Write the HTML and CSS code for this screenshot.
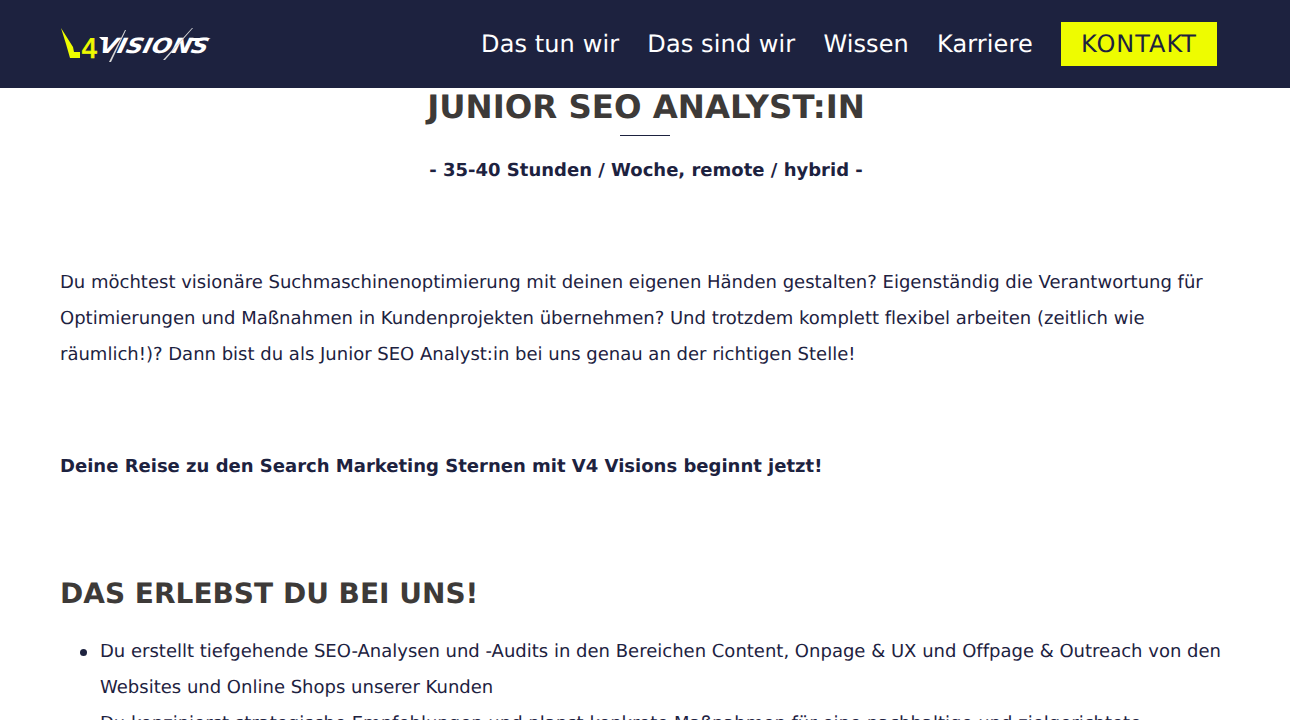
FILE: index.html
```html
<!DOCTYPE html>
<html lang="de">
<head>
    <meta charset="UTF-8">
    <title>Junior SEO Analyst:in</title>
    <link rel="stylesheet" href="styles.css">
</head>
<body>
<header class="site-header">
    <a href="#" class="logo" aria-label="V4 Visions">
        <svg width="152" height="40" viewBox="0 0 152 40">
            <polygon class="logo-v" points="1,4 13,23 14,28 20,28 20,34 10,34 6,20"/>
            <text x="21" y="34" class="logo-four">4</text>
            <text x="0" y="0" transform="translate(38 29) skewX(-14)" class="logo-word" textLength="109" lengthAdjust="spacingAndGlyphs">VISIONS</text>
            <polygon class="logo-word-tail" points="39,13 48,13 47,16 42,16"/>
            <polygon class="logo-word-tail" points="130,14 151,14 141,17 130,17"/>
            <polygon class="logo-cut" points="49,38 65,6 66,6 51,38"/>
            <polygon class="logo-cut" points="103,36 132,4 133,4 105,36"/>
        </svg>
    </a>
    <nav class="main-nav">
        <a href="#">Das tun wir</a>
        <a href="#">Das sind wir</a>
        <a href="#">Wissen</a>
        <a href="#">Karriere</a>
        <a href="#" class="btn-contact">KONTAKT</a>
    </nav>
</header>

<main class="content">
    <h1>JUNIOR SEO ANALYST:IN</h1>
    <div class="title-line"></div>
    <p class="subtitle">- 35-40 Stunden / Woche, remote / hybrid -</p>

    <p class="intro">Du möchtest visionäre Suchmaschinenoptimierung mit deinen eigenen Händen gestalten? Eigenständig die Verantwortung für Optimierungen und Maßnahmen in Kundenprojekten übernehmen? Und trotzdem komplett flexibel arbeiten (zeitlich wie räumlich!)? Dann bist du als Junior SEO Analyst:in bei uns genau an der richtigen Stelle!</p>

    <p class="claim">Deine Reise zu den Search Marketing Sternen mit V4 Visions beginnt jetzt!</p>

    <h2>DAS ERLEBST DU BEI UNS!</h2>
    <ul>
        <li>Du erstellt tiefgehende SEO-Analysen und -Audits in den Bereichen Content, Onpage &amp; UX und Offpage &amp; Outreach von den Websites und Online Shops unserer Kunden</li>
        <li>Du konzipierst strategische Empfehlungen und planst konkrete Maßnahmen für eine nachhaltige und zielgerichtete Suchmaschinenoptimierung</li>
    </ul>
</main>
</body>
</html>
```

FILE: styles.css
```css
html, body {
    margin: 0;
    padding: 0;
}

body {
    font-family: "DejaVu Sans", sans-serif;
    font-size: 18px;
    line-height: 36px;
    letter-spacing: 0.004px;
    color: #1d223f;
    background-color: #fff;
    padding-top: 88px;
    text-rendering: geometricPrecision;
    font-variant-ligatures: none;
}

.site-header {
    position: fixed;
    top: 0;
    left: 0;
    right: 0;
    height: 88px;
    box-sizing: border-box;
    padding: 0 73px 0 60px;
    background-color: #1d223f;
    display: flex;
    align-items: center;
    justify-content: space-between;
}

.logo {
    display: block;
    height: 40px;
}

.logo svg {
    display: block;
    overflow: visible;
}

.logo-word {
    font-family: "DejaVu Sans", sans-serif;
    font-size: 21px;
    font-weight: bold;
    font-style: italic;
    fill: #fff;
}

.logo-word-tail {
    fill: #fff;
}

.logo-four {
    font-family: "DejaVu Sans", sans-serif;
    font-size: 27px;
    fill: #eefc00;
    stroke: #eefc00;
    stroke-width: 0.7;
}

.logo-v {
    fill: #eefc00;
}

.logo-cut {
    fill: #d8d8d8;
}

.main-nav {
    display: flex;
    align-items: center;
    gap: 28.2px;
}

.main-nav a {
    font-size: 24px;
    line-height: 44px;
    letter-spacing: 0.1px;
    color: #fff;
    text-decoration: none;
}

.main-nav .btn-contact {
    padding: 1px 20px 0;
    line-height: 43px;
    background-color: #eefc00;
    color: #1d223f;
    letter-spacing: 1px;
}

.content {
    padding: 0 60px;
}

h1 {
    margin: 0;
    padding-left: 2px;
    font-size: 32.4px;
    line-height: 38px;
    text-align: center;
    color: #3d3a38;
}

.title-line {
    width: 50px;
    height: 1px;
    margin: 9px auto 0;
    background-color: #1d223f;
}

.subtitle {
    margin: 17px 0 0;
    padding-left: 2px;
    font-weight: bold;
    text-align: center;
}

.intro {
    margin: 76px 0 0;
}

.claim {
    margin: 76px 0 0;
    font-weight: bold;
}

h2 {
    margin: 91px 0 0;
    font-size: 28px;
    line-height: 36px;
    color: #3d3a38;
}

ul {
    margin: 22px 0 0;
    padding-left: 40px;
    list-style: none;
}

li {
    position: relative;
}

li::before {
    content: "";
    position: absolute;
    top: 15px;
    left: -20px;
    width: 7px;
    height: 7px;
    border-radius: 50%;
    background-color: #1d223f;
}
```
